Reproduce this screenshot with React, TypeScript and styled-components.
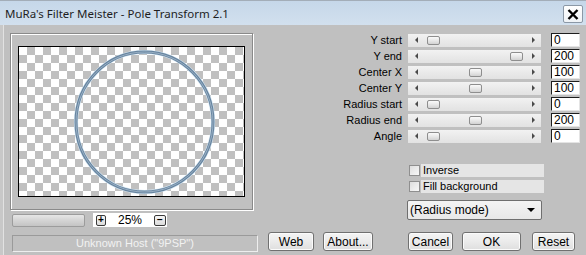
import React from 'react';
import styled, { createGlobalStyle } from 'styled-components';

const GlobalStyle = createGlobalStyle`
  html, body {
    margin: 0;
    padding: 0;
    background: #c0c0c0;
  }
  body {
    font-family: "Liberation Sans", Arial, sans-serif;
  }
`;

const Window = styled.div`
  width: 586px;
  height: 255px;
  display: flex;
  flex-direction: column;
  background: #c0c0c0;
  overflow: hidden;
`;

const TitleBar = styled.div`
  height: 25px;
  box-sizing: border-box;
  flex-shrink: 0;
  display: flex;
  align-items: center;
  justify-content: space-between;
  padding: 0 3px 0 5px;
  border-top: 1px solid #a3adb8;
  background: linear-gradient(#c6d7e9, #d2e0ee);
`;

const TitleText = styled.span`
  font-family: "Noto Sans", "Open Sans", sans-serif;
  font-size: 11.5px;
  color: #1e1e1e;
  margin-top: 1px;
`;

const CloseButton = styled.div`
  width: 20px;
  height: 18px;
  box-sizing: border-box;
  margin-top: 2px;
  display: flex;
  align-items: center;
  justify-content: center;
  border: 1px solid #8b98a6;
  border-radius: 2px;
  background: linear-gradient(#ffffff, #eef2f6);
`;

const Body = styled.div`
  flex: 1;
  display: flex;
  flex-direction: column;
  box-shadow: inset 3px 0 0 #c8c8c8, inset 4px 0 0 #e2e2e2;
`;

const TopSection = styled.div`
  height: 207px;
  display: flex;
`;

const LeftPanel = styled.div`
  width: 258px;
  box-sizing: border-box;
  padding: 8px 0 0 10px;
  display: flex;
  flex-direction: column;
`;

const GroupBox = styled.div`
  width: 243px;
  height: 177px;
  box-sizing: border-box;
  padding: 12px 0 0 7px;
  border: 1px solid #8a8a8a;
  box-shadow: inset 1px 1px 0 #ffffff, 1px 1px 0 #ffffff;
`;

const Preview = styled.div`
  position: relative;
  width: 227px;
  height: 151px;
  box-sizing: border-box;
  border: 1px solid #000;
  background-color: #fff;
  background-image: conic-gradient(#c0c0c0 25%, #ffffff 0 50%, #c0c0c0 0 75%, #ffffff 0);
  background-size: 16px 16px;
  svg {
    display: block;
  }
`;

const ZoomRow = styled.div`
  margin-top: 3px;
  padding-left: 2px;
  display: flex;
  align-items: center;
`;

const ZoomBar = styled.div`
  width: 73px;
  height: 13px;
  box-sizing: border-box;
  border: 1px solid #9c9c9c;
  border-radius: 2px;
  background: linear-gradient(#e6e6e6, #d4d4d4 50%, #c4c4c4);
`;

const ZoomBox = styled.div`
  margin-left: 8px;
  width: 74px;
  height: 14px;
  box-sizing: border-box;
  padding: 0 1px 0 3px;
  display: flex;
  align-items: center;
  justify-content: space-between;
  background: #fff;
`;

const ZoomButton = styled.div<{ $wide?: boolean }>`
  width: ${p => (p.$wide ? 12 : 10)}px;
  height: 11px;
  box-sizing: border-box;
  border: 1px solid #3a3a3a;
  border-radius: 2px;
  background: linear-gradient(#f6f6f6, #dcdcdc);
  display: flex;
  align-items: center;
  justify-content: center;
  font-size: 10px;
  font-weight: bold;
  line-height: 1;
  color: #000;
`;

const ZoomText = styled.span`
  font-size: 12px;
  color: #000;
`;

const RightPanel = styled.div`
  flex: 1;
  padding-top: 7px;
  display: flex;
  flex-direction: column;
`;

const SliderRow = styled.div`
  height: 16px;
  display: flex;
  align-items: center;
`;

const SliderLabel = styled.span`
  width: 144px;
  text-align: right;
  font-size: 11px;
  color: #000;
`;

const Track = styled.div`
  position: relative;
  margin-left: 6px;
  width: 133px;
  height: 13px;
  box-sizing: border-box;
  padding: 0 6px 0 7px;
  display: flex;
  align-items: center;
  justify-content: space-between;
  background: linear-gradient(#f2f2f2, #e8e8e8 60%, #e2e2e2);
`;

const Arrow = styled.span<{ $dir: 'left' | 'right' }>`
  width: 0;
  height: 0;
  border-top: 3px solid transparent;
  border-bottom: 3px solid transparent;
  ${p => (p.$dir === 'left' ? 'border-right: 3px solid #4a4a4a;' : 'border-left: 3px solid #4a4a4a;')}
`;

const Thumb = styled.div<{ $pos: number }>`
  position: absolute;
  top: 2px;
  left: ${p => p.$pos}px;
  width: 13px;
  height: 9px;
  box-sizing: border-box;
  border: 1px solid #8e8e8e;
  border-radius: 2px;
  background: linear-gradient(#fbfbfb, #e4e4e4 60%, #d2d2d2);
`;

const Edit = styled.div`
  margin-left: 10px;
  width: 29px;
  height: 14px;
  box-sizing: border-box;
  padding-left: 2px;
  border-top: 1px solid #1e1e1e;
  border-left: 1px solid #1e1e1e;
  border-right: 1px solid #e4e4e4;
  border-bottom: 1px solid #e4e4e4;
  background: #fff;
  font-size: 12px;
  line-height: 12px;
  color: #000;
`;

const CheckList = styled.div`
  margin: 20px 0 0 151px;
  display: flex;
  flex-direction: column;
  gap: 3px;
`;

const CheckRow = styled.div`
  height: 13px;
  display: flex;
  align-items: center;
`;

const CheckBox = styled.div`
  width: 11px;
  height: 11px;
  box-sizing: border-box;
  border: 1px solid #8f8f8f;
  background: linear-gradient(135deg, #dedede, #f8f8f8);
`;

const CheckLabel = styled.span`
  margin-left: 1px;
  width: 123px;
  height: 13px;
  box-sizing: border-box;
  padding-left: 2px;
  background: #e5e5e5;
  font-size: 11px;
  line-height: 13px;
  color: #000;
`;

const Select = styled.div`
  margin: 7px 0 0 149px;
  width: 135px;
  height: 20px;
  box-sizing: border-box;
  padding: 0 6px 0 2px;
  display: flex;
  align-items: center;
  justify-content: space-between;
  border: 1px solid #6f6f6f;
  border-radius: 2px;
  background: linear-gradient(#f4f4f4, #e8e8e8);
  font-size: 12px;
  color: #000;
`;

const SelectArrow = styled.span`
  width: 0;
  height: 0;
  border-left: 4px solid transparent;
  border-right: 4px solid transparent;
  border-top: 4px solid #000;
`;

const BottomRow = styled.div`
  height: 23px;
  padding-left: 12px;
  display: flex;
  align-items: flex-start;
`;

const StatusBar = styled.div`
  margin-top: 3px;
  width: 246px;
  height: 17px;
  box-sizing: border-box;
  border-top: 1px solid #9a9a9a;
  border-left: 1px solid #9a9a9a;
  border-right: 1px solid #eeeeee;
  border-bottom: 1px solid #eeeeee;
  text-align: center;
  font-size: 11px;
  line-height: 15px;
  color: #f2f2f2;
`;

const Button = styled.div<{ $gap: number; $width: number }>`
  margin-left: ${p => p.$gap}px;
  width: ${p => p.$width}px;
  height: 19px;
  box-sizing: border-box;
  display: flex;
  align-items: center;
  justify-content: center;
  border: 1px solid #707070;
  border-radius: 3px;
  box-shadow: inset 0 0 0 1px #fbfbfb;
  background: linear-gradient(#f4f4f4, #ebebeb 50%, #dedede);
  font-size: 12px;
  color: #000;
`;

const sliders = [
  { label: 'Y start', value: 0, max: 255 },
  { label: 'Y end', value: 200, max: 200 },
  { label: 'Center X', value: 100, max: 200 },
  { label: 'Center Y', value: 100, max: 200 },
  { label: 'Radius start', value: 0, max: 400 },
  { label: 'Radius end', value: 200, max: 400 },
  { label: 'Angle', value: 0, max: 360 },
];

const thumbLeft = (value: number, max: number) => Math.round(19 + 83 * (value / max));

export default function App() {
  return (
    <Window>
      <GlobalStyle />
      <TitleBar>
        <TitleText>MuRa's Filter Meister - Pole Transform 2.1</TitleText>
        <CloseButton>
          <svg width="12" height="11" viewBox="0 0 12 11">
            <path d="M1.5 1 L10.5 10 M10.5 1 L1.5 10" stroke="#000" strokeWidth="2.4" />
          </svg>
        </CloseButton>
      </TitleBar>
      <Body>
        <TopSection>
          <LeftPanel>
            <GroupBox>
              <Preview>
                <svg width="225" height="149" viewBox="0 0 225 149">
                  <ellipse cx="125.5" cy="75" rx="68.5" ry="70" fill="none" stroke="#d4e6f3" strokeWidth="4.2" />
                  <ellipse cx="125.5" cy="75" rx="68.5" ry="70" fill="none" stroke="#67849f" strokeWidth="3" />
                  <ellipse cx="125.5" cy="75" rx="68.5" ry="70" fill="none" stroke="#a6bbce" strokeWidth="0.8" />
                </svg>
              </Preview>
            </GroupBox>
            <ZoomRow>
              <ZoomBar />
              <ZoomBox>
                <ZoomButton>+</ZoomButton>
                <ZoomText>25%</ZoomText>
                <ZoomButton $wide>−</ZoomButton>
              </ZoomBox>
            </ZoomRow>
          </LeftPanel>
          <RightPanel>
            {sliders.map(s => (
              <SliderRow key={s.label}>
                <SliderLabel>{s.label}</SliderLabel>
                <Track>
                  <Arrow $dir="left" />
                  <Arrow $dir="right" />
                  <Thumb $pos={thumbLeft(s.value, s.max)} />
                </Track>
                <Edit>{s.value}</Edit>
              </SliderRow>
            ))}
            <CheckList>
              <CheckRow>
                <CheckBox />
                <CheckLabel>Inverse</CheckLabel>
              </CheckRow>
              <CheckRow>
                <CheckBox />
                <CheckLabel>Fill background</CheckLabel>
              </CheckRow>
            </CheckList>
            <Select>
              <span>(Radius mode)</span>
              <SelectArrow />
            </Select>
          </RightPanel>
        </TopSection>
        <BottomRow>
          <StatusBar>Unknown Host ("9PSP")</StatusBar>
          <Button $gap={10} $width={46}>Web</Button>
          <Button $gap={9} $width={50}>About...</Button>
          <Button $gap={35} $width={45}>Cancel</Button>
          <Button $gap={9} $width={59}>OK</Button>
          <Button $gap={11} $width={43}>Reset</Button>
        </BottomRow>
      </Body>
    </Window>
  );
}
